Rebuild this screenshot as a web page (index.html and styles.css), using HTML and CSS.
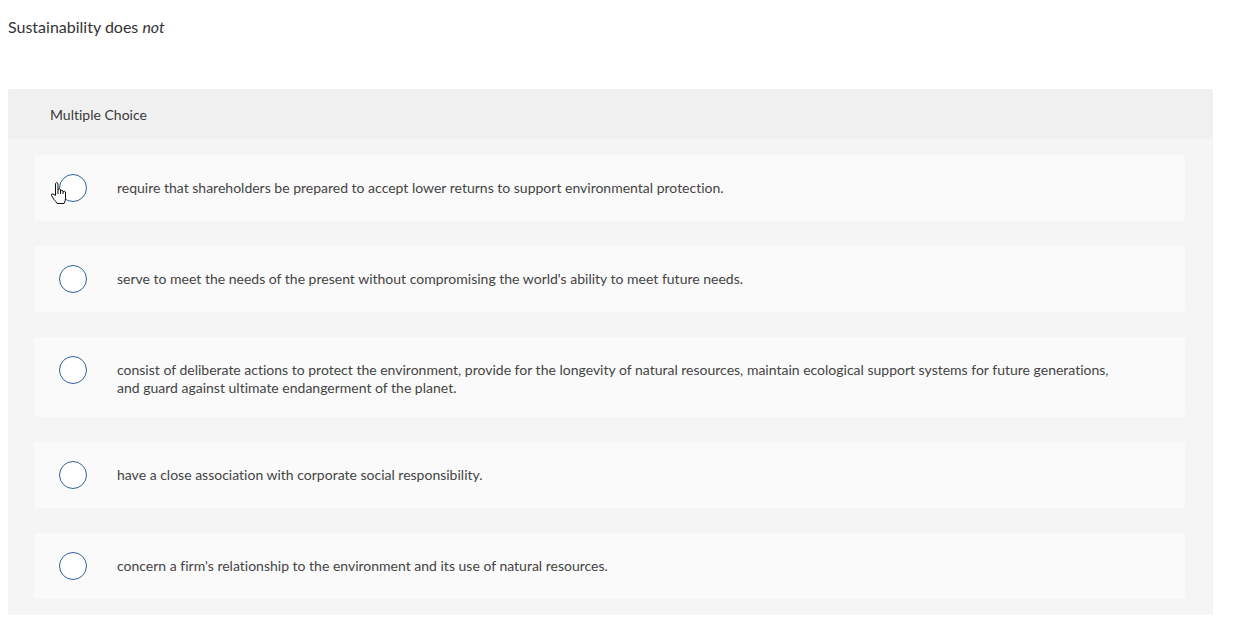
FILE: index.html
```html
<!DOCTYPE html>
<html lang="en">
<head>
<meta charset="utf-8">
<title>Multiple Choice</title>
<link rel="stylesheet" href="styles.css">
</head>
<body>
<div class="prompt">Sustainability does <em>not</em></div>
<section class="question">
  <header class="q-head">Multiple Choice</header>
  <div class="q-body">
    <label class="choice">
      <span class="radio"></span>
      <span class="choice-text">require that shareholders be prepared to accept lower returns to support environmental protection.</span>
      <svg class="cursor" width="17" height="24" viewBox="0 0 17 24" aria-hidden="true">
        <path d="M5.5 14.5 L5.5 2.5 Q6.75 0.5 8 2.5 L8 9 L8 8.5 Q9.25 7 10.5 8.5 L10.5 10 Q11.75 8.5 13 10 L13 11 Q14.25 9.5 15.5 11 L15.5 17 Q15.5 20 14 22.5 L7 22.5 Q6 20.5 4 18.5 L1.5 14.5 Q1 12.5 3 13 Z" fill="#fff" stroke="#111" stroke-width="1" stroke-linejoin="round"/>
        <path d="M8 9 L8 13 M10.5 10 L10.5 13 M13 11 L13 13" stroke="#111" stroke-width="1" fill="none"/>
      </svg>
    </label>
    <label class="choice">
      <span class="radio"></span>
      <span class="choice-text">serve to meet the needs of the present without compromising the world's ability to meet future needs.</span>
    </label>
    <label class="choice">
      <span class="radio"></span>
      <span class="choice-text">consist of deliberate actions to protect the environment, provide for the longevity of natural resources, maintain ecological support systems for future generations, and guard against ultimate endangerment of the planet.</span>
    </label>
    <label class="choice">
      <span class="radio"></span>
      <span class="choice-text">have a close association with corporate social responsibility.</span>
    </label>
    <label class="choice">
      <span class="radio"></span>
      <span class="choice-text">concern a firm's relationship to the environment and its use of natural resources.</span>
    </label>
  </div>
</section>
</body>
</html>
```

FILE: styles.css
```css
body {
  margin: 8px;
  font-family: Lato, "Liberation Sans", sans-serif;
  font-variant-ligatures: none;
  color: #444;
  background: #fff;
}

.prompt {
  margin-top: 9px;
  font-size: 16px;
  line-height: 20px;
  color: #333;
}

.question {
  margin-top: 52px;
  width: 1205px;
  background: #f5f5f5;
  border-radius: 3px 3px 0 0;
}

.q-head {
  height: 50px;
  display: flex;
  align-items: center;
  padding-left: 42px;
  background: #f0f0f0;
  border-radius: 3px 3px 0 0;
  font-size: 14px;
  color: #3a3a3a;
}

.q-body {
  display: flex;
  flex-direction: column;
  gap: 25px;
  padding: 16px 28px 16px 26px;
}

.choice {
  position: relative;
  display: flex;
  align-items: flex-start;
  padding: 19px 70px 19px 25px;
  background: #fafafa;
  border-radius: 3px;
}

.radio {
  flex: none;
  width: 28px;
  height: 28px;
  box-sizing: border-box;
  border: 1.5px solid #2f6299;
  border-radius: 50%;
  background: #fff;
}

.choice-text {
  margin: 5px 0 1px 30px;
  font-size: 14px;
  line-height: 18px;
}

.cursor {
  position: absolute;
  left: 16px;
  top: 26px;
}
```
